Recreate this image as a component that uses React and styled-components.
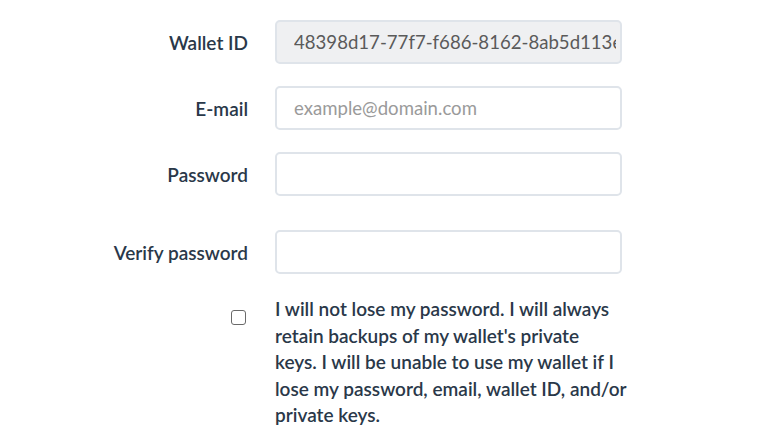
import React from "react";
import styled, { createGlobalStyle } from "styled-components";

const GlobalStyle = createGlobalStyle`
  body {
    margin: 0;
    background: #ffffff;
    font-family: Lato, "Open Sans", sans-serif;
  }
`;

const Form = styled.form`
  padding-top: 20px;
  display: flex;
  flex-direction: column;
`;

const Row = styled.div`
  display: grid;
  grid-template-columns: 248px 347px;
  column-gap: 27px;
  align-items: ${(p) => (p.$top ? "start" : "center")};
  margin-bottom: ${(p) => p.$gap || 22}px;
`;

const Label = styled.label`
  text-align: right;
  font-size: 19px;
  font-weight: 600;
  color: #2a3849;
`;

const Input = styled.input`
  box-sizing: border-box;
  width: 100%;
  height: 44px;
  padding: 0 4px 0 17px;
  border: 2px solid #dfe4ea;
  border-radius: 5px;
  background: ${(p) => (p.readOnly ? "#eff0f2" : "#ffffff")};
  font-family: Lato, "Open Sans", sans-serif;
  font-size: 18.6px;
  color: #5a5a5a;
  outline: none;
  &::placeholder {
    color: #9a9a9a;
  }
`;

const CheckCell = styled.div`
  display: flex;
  justify-content: flex-end;
  padding-top: 14px;
  padding-right: 2px;
`;

const Checkbox = styled.span`
  display: block;
  box-sizing: border-box;
  width: 15px;
  height: 15px;
  border: 1.5px solid #6a6a6a;
  border-radius: 3px;
  background: #fff;
`;

const Terms = styled.p`
  margin: 0 -10px 0 0;
  font-size: 19px;
  line-height: 26.5px;
  font-weight: 600;
  color: #2a3849;
  white-space: nowrap;
`;

export default function App() {
  return (
    <>
      <GlobalStyle />
      <Form>
        <Row>
          <Label>Wallet ID</Label>
          <Input readOnly value="48398d17-77f7-f686-8162-8ab5d113e2a1" />
        </Row>
        <Row>
          <Label>E-mail</Label>
          <Input placeholder="example@domain.com" />
        </Row>
        <Row $gap={34}>
          <Label>Password</Label>
          <Input type="password" />
        </Row>
        <Row $gap={22}>
          <Label>Verify password</Label>
          <Input type="password" />
        </Row>
        <Row $top>
          <CheckCell>
            <Checkbox />
          </CheckCell>
          <Terms>
            I will not lose my password. I will always
            <br />
            retain backups of my wallet's private
            <br />
            keys. I will be unable to use my wallet if I
            <br />
            lose my password, email, wallet ID, and/or
            <br />
            private keys.
          </Terms>
        </Row>
      </Form>
    </>
  );
}
